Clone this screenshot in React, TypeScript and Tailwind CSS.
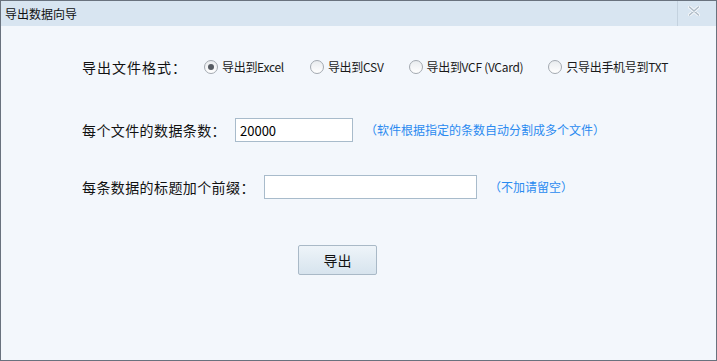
import { useState } from "react";

const options = [
  { id: "excel", label: "导出到Excel" },
  { id: "csv", label: "导出到CSV" },
  { id: "vcf", label: "导出到VCF (VCard)" },
  { id: "txt", label: "只导出手机号到TXT" },
];

function Radio({ checked, label, onClick, className }: { checked: boolean; label: string; onClick: () => void; className?: string }) {
  return (
    <button type="button" onClick={onClick} className={`flex items-center gap-[4px] ${className ?? ""}`}>
      <span className="w-[14px] h-[14px] rounded-full border border-[#a3a9b0] bg-gradient-to-b from-[#e9ecef] to-white flex items-center justify-center">
        {checked && <span className="w-[6px] h-[6px] rounded-full bg-[#555b62]" />}
      </span>
      <span className="text-[12px] text-[#1a1a1a] tracking-[-0.3px]">{label}</span>
    </button>
  );
}

export default function App() {
  const [format, setFormat] = useState("excel");
  const [count, setCount] = useState("20000");
  const [prefix, setPrefix] = useState("");

  return (
    <div
      className="w-[717px] h-[361px] border border-[#69727e] bg-[#f3f7fc] flex flex-col overflow-hidden"
      style={{ fontFamily: '"Noto Sans CJK SC", "Liberation Sans", sans-serif' }}
    >
      <div className="h-[25px] bg-[#d8e5f1] flex items-center justify-between">
        <span className="pl-[4px] text-[12px] text-[#111]">导出数据向导</span>
        <div className="h-full w-[32px] border-l border-[#c4d2df] flex items-start justify-center pt-[5px] mr-[7px]">
          <svg width="12" height="10" viewBox="0 0 12 10">
            <path d="M1.5 1 L10.5 9 M10.5 1 L1.5 9" stroke="#f7f9fb" strokeWidth="3.2" strokeLinecap="round" />
            <path d="M1.5 1 L10.5 9 M10.5 1 L1.5 9" stroke="#aebbc7" strokeWidth="1.5" strokeLinecap="round" />
          </svg>
        </div>
      </div>

      <div className="flex flex-col pl-[81px] pt-[29px]">
        <div className="flex items-center h-[24px]">
          <span className="text-[14px] text-[#111] w-[122px] tracking-[1px]">导出文件格式：</span>
          <Radio checked={format === "excel"} label={options[0].label} onClick={() => setFormat("excel")} />
          <Radio checked={format === "csv"} label={options[1].label} onClick={() => setFormat("csv")} className="ml-[26px]" />
          <Radio checked={format === "vcf"} label={options[2].label} onClick={() => setFormat("vcf")} className="ml-[25px]" />
          <Radio checked={format === "txt"} label={options[3].label} onClick={() => setFormat("txt")} className="ml-[25px]" />
        </div>

        <div className="flex items-center mt-[39px] h-[24px]">
          <span className="text-[14px] text-[#111] w-[153px] tracking-[0.4px]">每个文件的数据条数：</span>
          <input
            value={count}
            onChange={(e) => setCount(e.target.value)}
            className="w-[118px] h-[24px] bg-white border border-[#a8bbcb] px-[4px] text-[13px] text-black outline-none"
          />
          <span className="ml-[12px] text-[12px] text-[#2a8af0]">（软件根据指定的条数自动分割成多个文件）</span>
        </div>

        <div className="flex items-center mt-[33px] h-[24px]">
          <span className="text-[14px] text-[#111] w-[182px] tracking-[0.4px]">每条数据的标题加个前缀：</span>
          <input
            value={prefix}
            onChange={(e) => setPrefix(e.target.value)}
            className="w-[213px] h-[24px] bg-white border border-[#a8bbcb] px-[4px] text-[13px] text-black outline-none"
          />
          <span className="ml-[12px] text-[12px] text-[#2a8af0]">（不加请留空）</span>
        </div>

        <div className="flex mt-[46px] pl-[216px]">
          <button
            type="button"
            className="w-[79px] h-[30px] border border-[#a9b9c7] rounded-[2px] bg-gradient-to-b from-[#eef4f9] to-[#d7e4ee] text-[14px] text-[#111]"
          >
            导出
          </button>
        </div>
      </div>
    </div>
  );
}
